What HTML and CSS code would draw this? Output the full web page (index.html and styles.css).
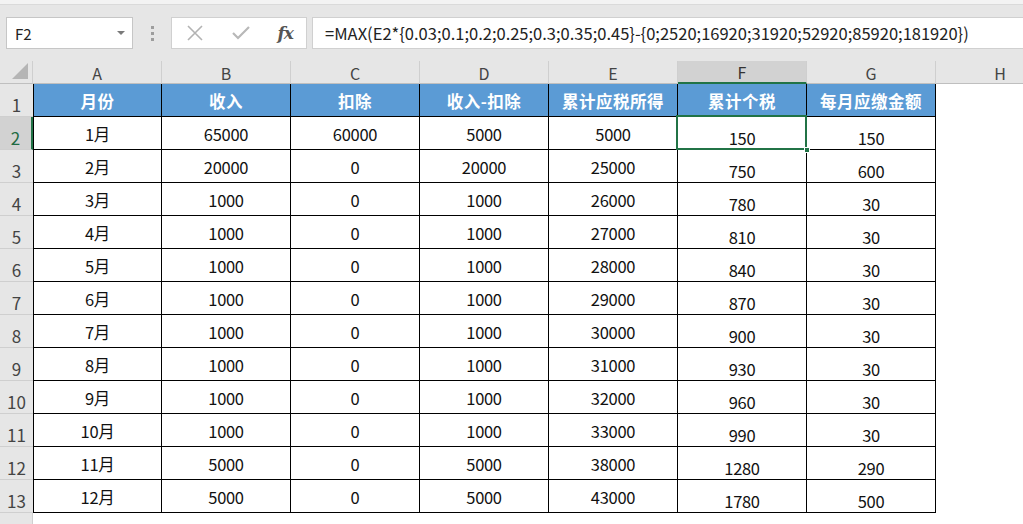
FILE: index.html
```html
<!DOCTYPE html>
<html lang="zh">
<head>
<meta charset="utf-8">
<title>Sheet</title>
<link rel="stylesheet" href="styles.css">
</head>
<body>
<div class="app">
  <div class="topstrip"></div>
  <div class="toolbar">
    <div class="namebox"><span>F2</span><span class="drop"></span></div>
    <div class="dots"><i></i><i></i><i></i></div>
    <div class="fxbox">
      <svg class="ico" width="18" height="18" viewBox="0 0 18 18"><path d="M2 2 L16 16 M16 2 L2 16" stroke="#b3b3b3" stroke-width="1.6" fill="none"/></svg>
      <svg class="ico" width="20" height="18" viewBox="0 0 20 18"><path d="M2 9 L7 14 L18 3" stroke="#b8b8b8" stroke-width="2.2" fill="none"/></svg>
      <span class="fx">fx</span>
    </div>
    <div class="formula">=MAX(E2*{0.03;0.1;0.2;0.25;0.3;0.35;0.45}-{0;2520;16920;31920;52920;85920;181920})</div>
  </div>
  <div class="sheet" id="sheet">
    <div class="corner"><span class="tri"></span></div>
    <div class="ch">A</div><div class="ch">B</div><div class="ch">C</div><div class="ch">D</div><div class="ch">E</div><div class="ch ch-sel">F</div><div class="ch">G</div><div class="ch">H</div>

    <div class="rh">1</div>
    <div class="c hd first">月份</div><div class="c hd">收入</div><div class="c hd">扣除</div><div class="c hd">收入-扣除</div><div class="c hd">累计应税所得</div><div class="c hd">累计个税</div><div class="c hd">每月应缴金额</div><div class="e"></div>

    <div class="rh rh-sel">2</div>
    <div class="c first">1月</div><div class="c">65000</div><div class="c">60000</div><div class="c">5000</div><div class="c">5000</div><div class="c lo sel">150<span class="handle"></span></div><div class="c lo">150</div><div class="e"></div>

    <div class="rh">3</div>
    <div class="c first">2月</div><div class="c">20000</div><div class="c">0</div><div class="c">20000</div><div class="c">25000</div><div class="c lo">750</div><div class="c lo">600</div><div class="e"></div>

    <div class="rh">4</div>
    <div class="c first">3月</div><div class="c">1000</div><div class="c">0</div><div class="c">1000</div><div class="c">26000</div><div class="c lo">780</div><div class="c lo">30</div><div class="e"></div>

    <div class="rh">5</div>
    <div class="c first">4月</div><div class="c">1000</div><div class="c">0</div><div class="c">1000</div><div class="c">27000</div><div class="c lo">810</div><div class="c lo">30</div><div class="e"></div>

    <div class="rh">6</div>
    <div class="c first">5月</div><div class="c">1000</div><div class="c">0</div><div class="c">1000</div><div class="c">28000</div><div class="c lo">840</div><div class="c lo">30</div><div class="e"></div>

    <div class="rh">7</div>
    <div class="c first">6月</div><div class="c">1000</div><div class="c">0</div><div class="c">1000</div><div class="c">29000</div><div class="c lo">870</div><div class="c lo">30</div><div class="e"></div>

    <div class="rh">8</div>
    <div class="c first">7月</div><div class="c">1000</div><div class="c">0</div><div class="c">1000</div><div class="c">30000</div><div class="c lo">900</div><div class="c lo">30</div><div class="e"></div>

    <div class="rh">9</div>
    <div class="c first">8月</div><div class="c">1000</div><div class="c">0</div><div class="c">1000</div><div class="c">31000</div><div class="c lo">930</div><div class="c lo">30</div><div class="e"></div>

    <div class="rh">10</div>
    <div class="c first">9月</div><div class="c">1000</div><div class="c">0</div><div class="c">1000</div><div class="c">32000</div><div class="c lo">960</div><div class="c lo">30</div><div class="e"></div>

    <div class="rh">11</div>
    <div class="c first">10月</div><div class="c">1000</div><div class="c">0</div><div class="c">1000</div><div class="c">33000</div><div class="c lo">990</div><div class="c lo">30</div><div class="e"></div>

    <div class="rh">12</div>
    <div class="c first">11月</div><div class="c">5000</div><div class="c">0</div><div class="c">5000</div><div class="c">38000</div><div class="c lo">1280</div><div class="c lo">290</div><div class="e"></div>

    <div class="rh">13</div>
    <div class="c first">12月</div><div class="c">5000</div><div class="c">0</div><div class="c">5000</div><div class="c">43000</div><div class="c lo">1780</div><div class="c lo">500</div><div class="e"></div>

    <div class="rh rh-empty"></div>
    <div class="e"></div><div class="e"></div><div class="e"></div><div class="e"></div><div class="e"></div><div class="e"></div><div class="e"></div><div class="e"></div>
  </div>
</div>
</body>
</html>
```

FILE: styles.css
```css
* { box-sizing: border-box; }
html, body { margin: 0; padding: 0; background: #fff; overflow: hidden; }
body { width: 1023px; height: 524px; font-family: "Noto Sans CJK SC", "Noto Sans", sans-serif; }
.app { width: 1023px; height: 524px; overflow: hidden; }

.topstrip { height: 5px; background: #f3f3f3; border-bottom: 1px solid #dadada; }
.toolbar {
  height: 56px; background: #e6e6e6;
  display: flex; align-items: flex-start; padding-top: 12px;
}
.namebox {
  margin-left: 6px; width: 127px; height: 32px;
  background: #fff; border: 1px solid #c6c6c6;
  display: flex; align-items: center; justify-content: space-between;
  padding: 0 7px 0 8px; font-size: 15px; color: #222;
}
.drop { width: 0; height: 0; border-left: 4px solid transparent; border-right: 4px solid transparent; border-top: 4px solid #7a7a7a; }
.dots { width: 38px; height: 32px; display: flex; flex-direction: column; align-items: center; justify-content: center; gap: 3px; }
.dots i { display: block; width: 3px; height: 3px; background: #9d9d9d; }
.fxbox {
  width: 136px; height: 32px; background: #fff; border: 1px solid #d0d0d0;
  display: flex; align-items: center; justify-content: space-between; padding: 0 13px 0 14px;
}
.ico { display: block; }
.fx { font-family: "DejaVu Serif", "Liberation Serif", serif; font-style: italic; font-size: 17px; color: #555; letter-spacing: -1px; font-weight: bold; }
.formula {
  margin-left: 5px; flex: 1; height: 32px; background: #fff; border: 1px solid #d0d0d0; border-right: none;
  display: flex; align-items: center; padding-left: 12px; padding-bottom: 1px;
  font-size: 16.5px; color: #222; white-space: nowrap; letter-spacing: 0;
}

.sheet {
  display: grid;
  grid-template-columns: 33px repeat(8, 129px);
  grid-template-rows: 23px;
  grid-auto-rows: 33px;
  width: 1065px;
}
.corner { background: #e6e6e6; border-right: 1px solid #cfcfcf; border-bottom: 1px solid #bfbfbf; position: relative; }
.tri { position: absolute; right: 4px; bottom: 4px; width: 0; height: 0; border-left: 16px solid transparent; border-bottom: 16px solid #b5b5b5; }
.ch {
  background: #e6e6e6; border-right: 1px solid #cfcfcf; border-bottom: 1px solid #bfbfbf;
  display: flex; align-items: center; justify-content: center;
  font-size: 16px; color: #444; padding-top: 1px;
}
.ch-sel { background: #d2d2d2; border-bottom: 2px solid #217346; color: #333; }
.rh {
  background: #e6e6e6; border-bottom: 1px solid #cfcfcf;
  display: flex; align-items: flex-end; justify-content: center;
  font-size: 17px; color: #444; line-height: 20px; padding-bottom: 1px;
}
.rh-sel { background: #d2d2d2; border-right: 2px solid #217346; color: #1e6b43; }
.rh-empty { border-right: 1px solid #cfcfcf; border-bottom: none; }

.c {
  border-right: 1px solid #000; border-bottom: 1px solid #000;
  display: flex; align-items: center; justify-content: center;
  font-size: 16.5px; color: #111; letter-spacing: -0.3px; padding-top: 2px;
}
.c.first { border-left: 1px solid #000; }
.c.hd { background: #5b9bd5; color: #fff; font-weight: bold; font-size: 16.5px; letter-spacing: 0.5px; padding-top: 1px; }
.c.lo { align-items: flex-end; padding-bottom: 0; line-height: 21px; }
.c.sel { position: relative; }
.c.sel::after {
  content: ""; position: absolute; left: -2px; top: -2px; right: -1px; bottom: -1px;
  border: 2px solid #217346;
}
.handle { position: absolute; right: -4px; bottom: -4px; width: 6px; height: 6px; background: #217346; border: 1px solid #fff; z-index: 2; }
.e { background: #fff; }
```
